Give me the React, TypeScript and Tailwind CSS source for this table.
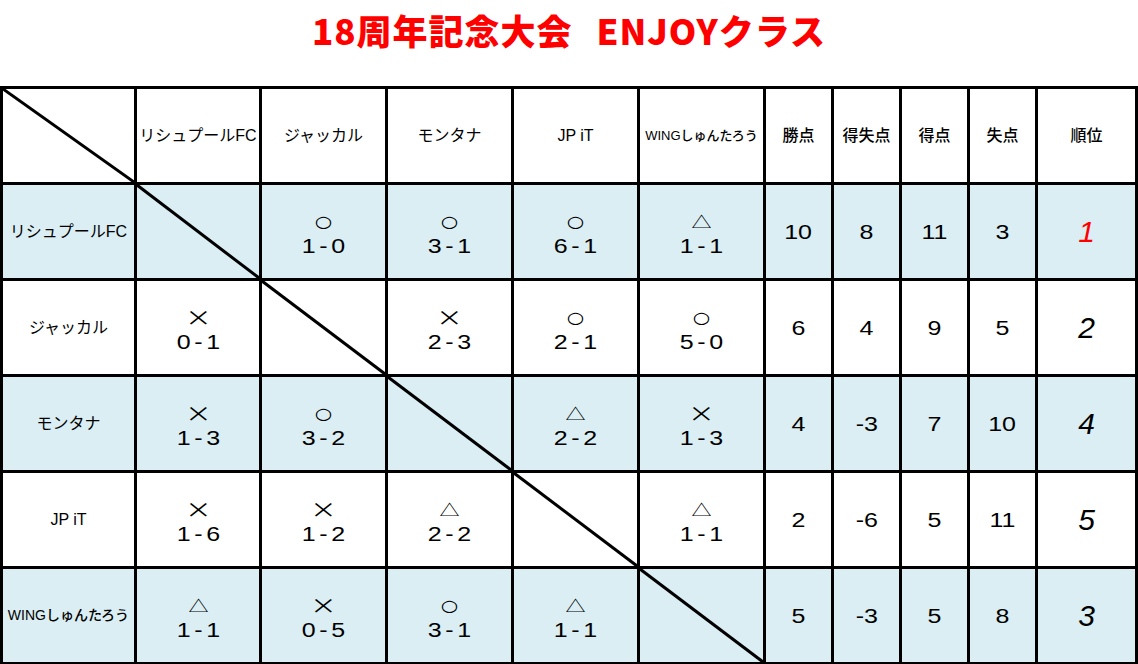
import React from "react";

type Result = { mark: string; score: string } | null;

const teams = [
  { name: "リシュプールFC", short: false },
  { name: "ジャッカル", short: false },
  { name: "モンタナ", short: false },
  { name: "JP iT", short: false },
  { name: "WINGしゅんたろう", short: true },
];

const results: Result[][] = [
  [null, { mark: "○", score: "1-0" }, { mark: "○", score: "3-1" }, { mark: "○", score: "6-1" }, { mark: "△", score: "1-1" }],
  [{ mark: "×", score: "0-1" }, null, { mark: "×", score: "2-3" }, { mark: "○", score: "2-1" }, { mark: "○", score: "5-0" }],
  [{ mark: "×", score: "1-3" }, { mark: "○", score: "3-2" }, null, { mark: "△", score: "2-2" }, { mark: "×", score: "1-3" }],
  [{ mark: "×", score: "1-6" }, { mark: "×", score: "1-2" }, { mark: "△", score: "2-2" }, null, { mark: "△", score: "1-1" }],
  [{ mark: "△", score: "1-1" }, { mark: "×", score: "0-5" }, { mark: "○", score: "3-1" }, { mark: "△", score: "1-1" }, null],
];

const stats = [
  { pts: "10", diff: "8", gf: "11", ga: "3", rank: "1" },
  { pts: "6", diff: "4", gf: "9", ga: "5", rank: "2" },
  { pts: "4", diff: "-3", gf: "7", ga: "10", rank: "4" },
  { pts: "2", diff: "-6", gf: "5", ga: "11", rank: "5" },
  { pts: "5", diff: "-3", gf: "5", ga: "8", rank: "3" },
];

const font = { fontFamily: '"Liberation Sans", "Noto Sans CJK JP", sans-serif' };

// mark glyph size + font, tuned per symbol
const markStyle: Record<string, { cls: string; family: string }> = {
  "○": { cls: "text-[16px] h-[20px] mb-[2px]", family: '"DejaVu Sans", sans-serif' },
  "△": { cls: "text-[16px] h-[18px] mb-[4px]", family: '"Noto Sans CJK JP", sans-serif' },
  "×": { cls: "text-[21px] h-[17px] mb-[5px]", family: '"Noto Sans CJK JP", sans-serif' },
};

function Diagonal() {
  return (
    <svg className="absolute inset-0 h-full w-full" viewBox="0 0 100 100" preserveAspectRatio="none">
      <line x1="0" y1="0" x2="100" y2="100" stroke="black" strokeWidth="3" vectorEffect="non-scaling-stroke" />
    </svg>
  );
}

function Cell({ blue, children, diag }: { blue?: boolean; children?: React.ReactNode; diag?: boolean }) {
  return (
    <div className={`relative flex items-center justify-center text-black ${blue ? "bg-[#daeef3]" : "bg-white"}`}>
      {diag && <Diagonal />}
      {children}
    </div>
  );
}

export default function App() {
  return (
    <div className="w-[1138px] h-[664px] overflow-hidden bg-white" style={font}>
      <div className="flex h-[86px] justify-center pt-[12px]">
        <h1
          className="flex gap-[24px] text-[35px] leading-none font-black text-[#ff0000] tracking-[1px]"
          style={{ fontFamily: '"Noto Sans CJK JP", sans-serif' }}
        >
          <span>18周年記念大会</span>
          <span>ENJOYクラス</span>
        </h1>
      </div>

      <div className="grid grid-cols-[131px_122px_123px_123px_123px_123px_65px_65px_65px_65px_97px] grid-rows-[93px_93px_93px_93px_93px_93px] gap-[3px] bg-black p-[3px]">
        {/* header row */}
        <Cell diag />
        {teams.map((t) => (
          <Cell key={t.name}>
            <span className={t.short ? "text-[13px] font-medium" : "text-[16px]"}>{t.name}</span>
          </Cell>
        ))}
        {["勝点", "得失点", "得点", "失点", "順位"].map((h) => (
          <Cell key={h}>
            <span className="text-[16px] font-medium">{h}</span>
          </Cell>
        ))}

        {teams.map((t, r) => {
          const blue = r % 2 === 0;
          const s = stats[r];
          return (
            <React.Fragment key={t.name}>
              <Cell blue={blue}>
                <span className={t.short ? "text-[14px] font-medium" : "text-[16px]"}>{t.name}</span>
              </Cell>
              {results[r].map((res, c) =>
                res ? (
                  <Cell key={c} blue={blue}>
                    <div className="flex scale-x-[1.25] flex-col items-center pt-[6px]">
                      <span
                        className={`flex items-center leading-none ${markStyle[res.mark].cls}`}
                        style={{ fontFamily: markStyle[res.mark].family }}
                      >
                        {res.mark}
                      </span>
                      <span className="h-[24px] text-[20px] leading-[24px] tracking-[3px] pl-[3px]">{res.score}</span>
                    </div>
                  </Cell>
                ) : (
                  <Cell key={c} blue={blue} diag />
                )
              )}
              {[s.pts, s.diff, s.gf, s.ga].map((v, i) => (
                <Cell key={i} blue={blue}>
                  <span className="inline-block scale-x-[1.25] text-[20px]">{v}</span>
                </Cell>
              ))}
              <Cell blue={blue}>
                <span className={`text-[30px] italic ${s.rank === "1" ? "text-[#ff0000]" : "text-black"}`}>{s.rank}</span>
              </Cell>
            </React.Fragment>
          );
        })}
      </div>
    </div>
  );
}
